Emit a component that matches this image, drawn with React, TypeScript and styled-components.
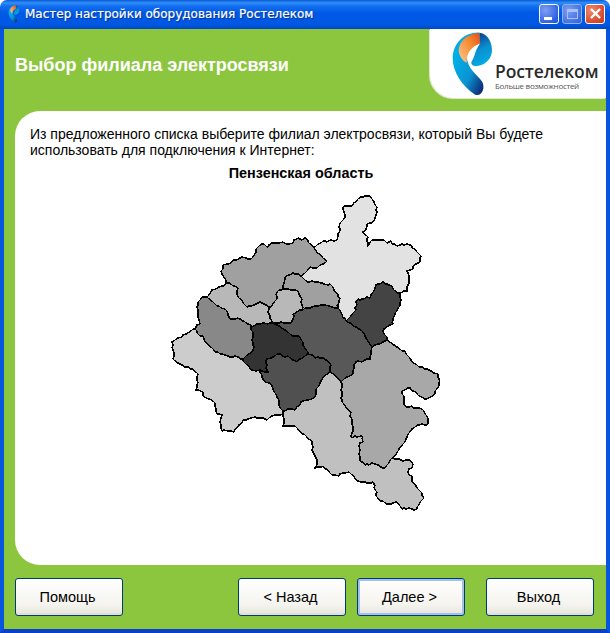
import React from "react";
import styled, { createGlobalStyle } from "styled-components";

const GlobalStyle = createGlobalStyle`
  html, body {
    margin: 0;
    padding: 0;
    background: #fff;
  }
`;

const Window = styled.div`
  width: 610px;
  height: 633px;
  display: flex;
  flex-direction: column;
  font-family: "Liberation Sans", Arial, sans-serif;
  overflow: hidden;
`;

const TitleBar = styled.div`
  height: 29px;
  flex: none;
  display: flex;
  align-items: center;
  padding: 0 5px 2px 8px;
  box-sizing: border-box;
  border-radius: 7px 7px 0 0;
  background: linear-gradient(
    180deg,
    #0a5ad6 0%,
    #2f8ff8 10%,
    #1470f0 20%,
    #0059e6 45%,
    #0058e2 85%,
    #0048c4 100%
  );
`;

const TitleText = styled.span`
  margin-left: 5px;
  color: #fff;
  font-family: "DejaVu Sans", sans-serif;
  font-size: 12px;
  white-space: nowrap;
  text-shadow: 1px 1px 1px #0a2f8c;
  -webkit-text-stroke: 0.2px #fff;
`;

const Controls = styled.div`
  margin-left: auto;
  display: flex;
  gap: 3px;
`;

const ControlButton = styled.div<{ $kind: "min" | "max" | "close" }>`
  width: 20px;
  height: 20px;
  box-sizing: border-box;
  border: 1px solid ${(p) => (p.$kind === "max" ? "#8fb0ee" : "#fff")};
  border-radius: 3px;
  display: flex;
  align-items: center;
  justify-content: center;
  background: ${(p) =>
    p.$kind === "close"
      ? "radial-gradient(circle at 30% 30%, #ee8a6c, #d8492a 70%, #c23a1c)"
      : p.$kind === "max"
        ? "radial-gradient(circle at 30% 30%, #7d9df0, #3f6fe0 75%, #2f5fd6)"
        : "radial-gradient(circle at 30% 30%, #7f9ff2, #2c5fe2 75%, #1f4fd0)"};
`;

const MinGlyph = styled.div`
  width: 8px;
  height: 3px;
  margin-top: 9px;
  margin-right: 3px;
  background: #fff;
`;

const MaxGlyph = styled.div`
  width: 11px;
  height: 10px;
  box-sizing: border-box;
  border: 1px solid #a8c0f4;
  border-top-width: 3px;
`;

const Body = styled.div`
  flex: 1;
  min-height: 0;
  display: flex;
  flex-direction: column;
  background: #8cc63f;
  border-left: 4px solid #0855dd;
  border-right: 4px solid #0855dd;
  border-bottom: 4px solid #0840c8;
`;

const Header = styled.header`
  height: 82px;
  flex: none;
  display: flex;
  justify-content: space-between;
  align-items: flex-start;
  padding-left: 11px;
`;

const Heading = styled.h1`
  margin: 24px 0 0;
  color: #fff;
  font-size: 18px;
  line-height: 24px;
  font-weight: 700;
`;

const LogoPanel = styled.div`
  width: 176px;
  height: 69px;
  box-sizing: border-box;
  display: flex;
  align-items: flex-start;
  padding: 2px 0 0 21px;
  background: #fff;
  border-bottom-left-radius: 24px;
  box-shadow: -1px 1px 0 #dfe8cf;
`;

const LogoWords = styled.div`
  display: flex;
  flex-direction: column;
  padding: 31px 0 0 1px;
  color: #2b2b2b;
`;

const LogoName = styled.span`
  font-family: "Open Sans", sans-serif;
  font-weight: 600;
  font-size: 17.5px;
  line-height: 18px;
  letter-spacing: -0.1px;
`;

const LogoTagline = styled.span`
  margin-top: 1px;
  font-family: "Open Sans", sans-serif;
  font-size: 8px;
  line-height: 10px;
  letter-spacing: -0.3px;
  color: #555;
`;

const Panel = styled.main`
  flex: none;
  height: 454px;
  margin-left: 11px;
  box-sizing: border-box;
  padding: 15px 19px 0 15px;
  background: #fff;
  border-radius: 25px 0 0 25px;
`;

const Intro = styled.p`
  margin: 0;
  color: #000;
  font-size: 14px;
  line-height: 16px;
`;

const MapTitle = styled.div`
  margin-top: 7px;
  padding-right: 15px;
  text-align: center;
  color: #000;
  font-size: 14.4px;
  line-height: 16px;
  font-weight: 700;
`;

const MapDrawing = styled.svg`
  display: block;
  margin: 8px 0 0 130px;
`;

const Footer = styled.footer`
  flex: 1;
  display: flex;
  align-items: flex-start;
  padding: 13px 0 0 11px;
`;

const ActionButton = styled.button<{ $isDefault?: boolean; $gap?: number }>`
  width: 108px;
  height: 38px;
  margin-left: ${(p) => p.$gap ?? 0}px;
  padding: 0 3px 0 0;
  border: 1px solid #003c74;
  border-radius: 3px;
  color: #000;
  font-family: "Liberation Sans", Arial, sans-serif;
  font-size: 14.5px;
  background: linear-gradient(180deg, #fff 0%, #f5f4ef 70%, #e6e4da 100%);
  box-shadow: ${(p) =>
    p.$isDefault
      ? "inset 0 0 0 2px #a4c0ec"
      : "inset 0 -2px 0 #e2e0d6"};
`;

// outline points of the districts, page pixels
const districts: { fill: string; pts: number[][] }[] = [
  {
    fill: "#e2e2e2",
    pts: [
      [314, 248], [323, 242], [327, 243], [337, 241], [339, 228], [345, 218], [343, 208], [352, 207], [361, 198],
      [370, 197], [373, 201], [377, 208], [376, 216], [373, 223], [367, 225], [363, 233], [367, 240], [368, 247],
      [372, 241], [380, 241], [387, 244], [391, 242], [396, 246], [407, 245], [415, 250], [421, 257], [420, 263],
      [407, 272], [409, 282], [407, 292], [400, 294], [395, 292], [392, 287], [383, 283], [378, 285], [373, 293],
      [370, 299], [358, 300], [356, 311], [346, 322], [342, 320], [338, 308], [338, 295], [330, 285], [318, 283],
      [308, 283], [301, 277], [310, 268], [317, 269], [327, 262],
    ],
  },
  {
    fill: "#a0a0a0",
    pts: [
      [221, 272], [223, 266], [240, 259], [253, 258], [256, 250], [262, 245], [268, 248], [272, 244], [287, 245],
      [297, 240], [305, 239], [314, 248], [327, 262], [317, 269], [310, 268], [301, 277], [293, 274], [285, 278],
      [283, 290], [277, 293], [275, 302], [269, 308], [260, 303], [247, 308], [240, 300], [237, 288], [226, 284],
    ],
  },
  {
    fill: "#a0a0a0",
    pts: [
      [301, 277], [293, 274], [285, 278], [283, 290], [298, 292], [302, 300], [302, 310], [303, 311], [320, 306],
      [338, 309], [338, 295], [330, 285], [318, 283], [308, 283],
    ],
  },
  {
    fill: "#b8b8b8",
    pts: [
      [283, 290], [298, 292], [302, 300], [302, 310], [293, 315], [291, 324], [272, 324], [269, 308], [275, 302],
      [277, 293],
    ],
  },
  {
    fill: "#b8b8b8",
    pts: [
      [226, 284], [237, 288], [240, 300], [247, 308], [260, 303], [269, 308], [272, 324], [257, 325], [251, 328],
      [240, 320], [230, 320], [225, 310], [215, 305], [207, 298], [212, 291],
    ],
  },
  {
    fill: "#888888",
    pts: [
      [207, 298], [215, 305], [225, 310], [230, 320], [240, 320], [251, 328], [253, 338], [252, 353], [243, 360],
      [230, 358], [218, 353], [205, 343], [195, 330], [200, 325], [198, 318], [198, 303], [202, 298],
    ],
  },
  {
    fill: "#cccccc",
    pts: [
      [172, 343], [193, 330], [195, 330], [205, 343], [218, 353], [230, 358], [243, 360], [250, 370], [260, 371],
      [264, 382], [272, 387], [277, 398], [283, 412], [283, 415], [275, 416], [268, 420], [260, 419], [255, 418],
      [243, 421], [235, 430], [234, 433], [222, 432], [220, 423], [222, 416], [217, 415], [215, 407], [210, 400],
      [204, 398], [203, 393], [196, 391], [198, 383], [198, 375], [193, 370], [185, 368], [178, 364], [173, 360],
      [173, 347],
    ],
  },
  {
    fill: "#c0c0c0",
    pts: [
      [330, 372], [341, 383], [342, 403], [351, 413], [353, 428], [352, 439], [363, 438], [363, 443], [359, 447],
      [360, 462], [365, 466], [372, 464], [378, 466], [385, 469], [392, 459], [410, 461], [413, 465], [408, 473],
      [412, 477], [412, 483], [420, 492], [424, 499], [417, 510], [402, 510], [396, 503], [387, 505], [376, 497],
      [373, 483], [361, 483], [350, 474], [332, 476], [323, 467], [315, 469], [317, 461], [313, 453], [312, 442],
      [300, 433], [295, 427], [283, 427], [283, 415], [283, 412], [295, 411], [303, 402], [315, 398], [318, 388],
    ],
  },
  {
    fill: "#a8a8a8",
    pts: [
      [387, 341], [400, 350], [408, 357], [412, 363], [422, 368], [438, 375], [440, 382], [435, 395], [425, 400],
      [417, 395], [410, 389], [402, 392], [406, 408], [422, 410], [428, 420], [427, 426], [418, 426], [408, 435],
      [405, 443], [397, 453], [392, 459], [385, 469], [378, 466], [372, 464], [365, 466], [360, 462], [359, 447],
      [363, 443], [363, 438], [352, 439], [353, 428], [351, 413], [342, 403], [341, 383], [353, 375], [356, 363],
      [370, 360], [372, 348], [380, 345],
    ],
  },
  {
    fill: "#444444",
    pts: [
      [346, 322], [356, 311], [358, 300], [370, 299], [373, 293], [378, 285], [383, 283], [392, 287], [395, 292],
      [400, 294], [400, 307], [395, 315], [393, 325], [383, 332], [387, 341], [380, 345], [372, 348], [368, 342],
      [363, 333], [353, 327],
    ],
  },
  {
    fill: "#585858",
    pts: [
      [291, 324], [293, 315], [303, 311], [320, 306], [338, 309], [346, 322], [353, 327], [363, 333], [368, 342],
      [372, 348], [370, 360], [356, 363], [353, 375], [341, 383], [330, 372], [329, 363], [318, 358], [308, 355],
      [300, 338], [293, 337], [283, 330], [275, 325], [272, 324],
    ],
  },
  {
    fill: "#505050",
    pts: [
      [266, 362], [277, 355], [288, 357], [297, 363], [308, 355], [318, 358], [329, 363], [330, 372], [318, 388],
      [315, 398], [303, 402], [295, 411], [283, 412], [277, 398], [272, 387], [264, 382], [260, 371], [268, 373],
    ],
  },
  {
    fill: "#333333",
    pts: [
      [251, 328], [257, 325], [272, 324], [275, 325], [283, 330], [293, 337], [300, 338], [308, 355], [297, 363],
      [288, 357], [277, 355], [266, 362], [268, 373], [260, 371], [250, 370], [243, 360], [252, 353], [253, 338],
    ],
  },
];

// the borders in the map are jagged: nudge each edge midpoint by an amount that
// depends only on where it is, so two neighbours share the same wobble
const nudge = (x: number, y: number) => {
  const h = Math.sin(x * 12.9898 + y * 78.233) * 43758.5453;
  return (h - Math.floor(h) - 0.5) * 2.4;
};

const roughen = (a: number[], b: number[], out: number[][]) => {
  const len = Math.hypot(b[0] - a[0], b[1] - a[1]);
  if (len < 4) return;
  const mx = (a[0] + b[0]) / 2;
  const my = (a[1] + b[1]) / 2;
  const mid = [mx + nudge(mx, my), my + nudge(my, mx)];
  roughen(a, mid, out);
  out.push(mid);
  roughen(mid, b, out);
};

const outline = (pts: number[][]) => {
  const out: number[][] = [];
  pts.forEach((p, i) => {
    out.push(p);
    roughen(p, pts[(i + 1) % pts.length], out);
  });
  return out.map((p) => `${Math.round(p[0])},${Math.round(p[1])}`).join(" ");
};

const RegionMap = () => (
  <MapDrawing width={280} height={325} viewBox="160 190 280 325">
    {districts.map((d, i) => (
      <polygon
        key={i}
        points={outline(d.pts)}
        fill={d.fill}
        stroke="#000"
        strokeWidth={1.4}
        strokeLinejoin="round"
        shapeRendering="crispEdges"
      />
    ))}
  </MapDrawing>
);

const LogoMark = ({ id, width, height }: { id: string; width: number; height: number }) => (
  <svg width={width} height={height} viewBox="92 92 130 200">
    <defs>
      <linearGradient id={`${id}-body`} x1="0.2" y1="0.3" x2="0.9" y2="0.95">
        <stop offset="0" stopColor="#00aee6" />
        <stop offset="0.55" stopColor="#0a93d2" />
        <stop offset="1" stopColor="#0a2f7a" />
      </linearGradient>
      <linearGradient id={`${id}-head`} x1="0.3" y1="0" x2="0.6" y2="1">
        <stop offset="0" stopColor="#0a3a88" />
        <stop offset="0.5" stopColor="#0a8fd0" />
        <stop offset="1" stopColor="#00aee6" />
      </linearGradient>
      <linearGradient id={`${id}-top`} x1="1" y1="0" x2="0" y2="0.9">
        <stop offset="0" stopColor="#e8481c" />
        <stop offset="0.4" stopColor="#f5872c" />
        <stop offset="1" stopColor="#fbc48c" />
      </linearGradient>
    </defs>
    <path
      d="M178 97C132 95 97 130 97 175C97 215 125 258 165 285C185 292 197 265 186 245C172 225 140 205 140 170C140 150 160 135 180 130Z"
      fill={`url(#${id}-body)`}
    />
    <path
      d="M178 98C150 100 118 115 115 150C116 165 125 182 140 188C137 165 150 140 180 130Z"
      fill={`url(#${id}-top)`}
    />
    <path
      d="M178 97C205 100 218 130 216 155C212 185 185 200 165 198C153 196 150 188 158 178C165 165 165 150 180 130Z"
      fill={`url(#${id}-head)`}
    />
  </svg>
);

export default function App() {
  return (
    <Window>
      <GlobalStyle />
      <TitleBar>
        <LogoMark id="small" width={12} height={18} />
        <TitleText>Мастер настройки оборудования Ростелеком</TitleText>
        <Controls>
          <ControlButton $kind="min">
            <MinGlyph />
          </ControlButton>
          <ControlButton $kind="max">
            <MaxGlyph />
          </ControlButton>
          <ControlButton $kind="close">
            <svg width="13" height="13" viewBox="0 0 13 13">
              <path d="M2 2L11 11M11 2L2 11" stroke="#fff" strokeWidth="2.4" />
            </svg>
          </ControlButton>
        </Controls>
      </TitleBar>
      <Body>
        <Header>
          <Heading>Выбор филиала электросвязи</Heading>
          <LogoPanel>
            <LogoMark id="big" width={43} height={66} />
            <LogoWords>
              <LogoName>Ростелеком</LogoName>
              <LogoTagline>Больше возможностей</LogoTagline>
            </LogoWords>
          </LogoPanel>
        </Header>
        <Panel>
          <Intro>
            Из предложенного списка выберите филиал электросвязи, который Вы будете использовать для подключения к
            Интернет:
          </Intro>
          <MapTitle>Пензенская область</MapTitle>
          <RegionMap />
        </Panel>
        <Footer>
          <ActionButton>Помощь</ActionButton>
          <ActionButton $gap={115}>&lt; Назад</ActionButton>
          <ActionButton $gap={11} $isDefault>
            Далее &gt;
          </ActionButton>
          <ActionButton $gap={21}>Выход</ActionButton>
        </Footer>
      </Body>
    </Window>
  );
}
